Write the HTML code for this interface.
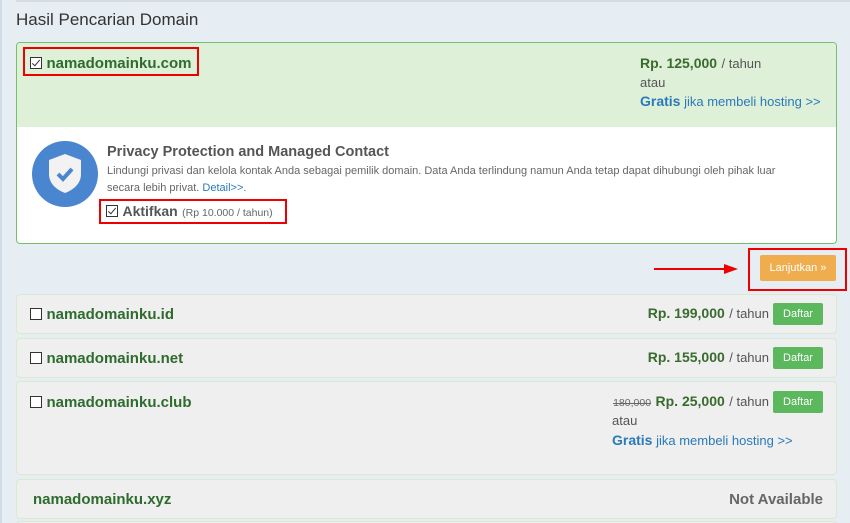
<!DOCTYPE html>
<html><head><style>
html,body{margin:0;width:850px;height:523px;overflow:hidden}
body{background:#e6edf3;font-family:"Liberation Sans",sans-serif;position:relative}
.a{position:absolute}
.lb{left:0;top:0;width:2px;height:523px;background:#cfdce6}
.tb{left:16px;top:0;width:834px;height:2px;background:#d5dde3}
h1{position:absolute;left:16px;top:10px;margin:0;font-weight:normal;font-size:17px;color:#333}
.box{left:16px;top:42px;width:819px;height:200px;border:1px solid #72c06e;border-radius:4px;background:#fff;overflow:hidden}
.gh{left:0;top:0;width:819px;height:84px;background:#dff0d8}
.red{border:2px solid #e00;box-sizing:border-box}
.cb{display:inline-block;width:12px;height:12px;border:1px solid #333;box-sizing:border-box;vertical-align:-1px;position:relative;background:#fff}
.cb.c:after{content:"";position:absolute;left:3px;top:0;width:3px;height:7px;border:solid #333;border-width:0 1.5px 1.5px 0;transform:rotate(40deg)}
.dn{color:#2e6b2e;font-weight:bold;font-size:15px}
.pr{color:#3a6b2e;font-weight:bold;font-size:14px}
.g{color:#555;font-size:13px}
.bl{color:#2a7ab8;font-size:13px}
.row{left:16px;width:819px;border:1px solid #d8ead2;border-radius:4px;background:#efefef}
.btn{background:#5cb85c;color:#fff;font-size:11px;width:50px;height:22px;line-height:22px;text-align:center;border-radius:2px;display:inline-block;margin-left:4px;vertical-align:middle}
.rt{right:27px;white-space:nowrap}
</style></head><body>
<div class="a lb"></div><div class="a tb"></div>
<h1>Hasil Pencarian Domain</h1>
<div class="a box">
 <div class="a gh"></div>
 <div class="a" style="left:623px;top:11px;line-height:19px;white-space:nowrap"><span class="pr">Rp. 125,000</span> <span class="g">/ tahun</span><br><span class="g">atau</span><br><span class="bl"><b style="font-size:14px">Gratis</b> jika membeli hosting &gt;&gt;</span></div>
 <svg class="a" style="left:14px;top:97px" width="68" height="68" viewBox="0 0 68 68"><circle cx="34" cy="34" r="33" fill="#4a85cf"/><path d="M34 14 L50 20 V34 C50 44 42 50 34 53 C26 50 18 44 18 34 V20Z" fill="#f2f2f2"/><path d="M27 34 L32 39 L41 29" stroke="#4a85cf" stroke-width="4" fill="none"/></svg>
 <div class="a" style="left:90px;top:101px;font-size:14.5px;font-weight:bold;color:#555">Privacy Protection and Managed Contact</div>
 <div class="a" style="left:90px;top:120px;width:695px;font-size:11px;color:#666;line-height:17px">Lindungi privasi dan kelola kontak Anda sebagai pemilik domain. Data Anda terlindung namun Anda tetap dapat dihubungi oleh pihak luar secara lebih privat. <span style="color:#2a7ab8">Detail&gt;&gt;</span>.</div>
</div>
<div class="a red" style="left:23px;top:47px;width:176px;height:29px"></div>
<div class="a" style="left:30px;top:55px"><span class="cb c"></span> <span class="dn">namadomainku.com</span></div>
<div class="a red" style="left:99px;top:199px;width:188px;height:25px"></div>
<div class="a" style="left:106px;top:203px"><span class="cb c"></span> <b style="font-size:14px;color:#555">Aktifkan</b> <span style="font-size:10.5px;color:#666">(Rp 10.000 / tahun)</span></div>
<svg class="a" style="left:654px;top:263px" width="86" height="12"><line x1="0" y1="6" x2="72" y2="6" stroke="#e00" stroke-width="2"/><path d="M70 1 L84 6 L70 11Z" fill="#e00"/></svg>
<div class="a red" style="left:748px;top:248px;width:99px;height:43px"></div>
<div class="a" style="left:760px;top:255px;width:76px;height:26px;background:#f0ad4e;border-radius:2px;color:#fff;font-size:11px;text-align:center;line-height:26px">Lanjutkan »</div>

<div class="a row" style="top:294px;height:38px"></div>
<div class="a" style="left:30px;top:306px"><span class="cb"></span> <span class="dn">namadomainku.id</span></div>
<div class="a rt" style="top:303px"><span class="pr">Rp. 199,000</span> <span class="g">/ tahun</span><span class="btn">Daftar</span></div>

<div class="a row" style="top:338px;height:38px"></div>
<div class="a" style="left:30px;top:350px"><span class="cb"></span> <span class="dn">namadomainku.net</span></div>
<div class="a rt" style="top:347px"><span class="pr">Rp. 155,000</span> <span class="g">/ tahun</span><span class="btn">Daftar</span></div>

<div class="a row" style="top:381px;height:92px"></div>
<div class="a" style="left:30px;top:394px"><span class="cb"></span> <span class="dn">namadomainku.club</span></div>
<div class="a rt" style="top:391px"><s style="font-size:10.5px;color:#666">180,000</s> <span class="pr">Rp. 25,000</span> <span class="g">/ tahun</span><span class="btn">Daftar</span></div>
<div class="a g" style="left:612px;top:413px">atau</div>
<div class="a bl" style="left:612px;top:432px;white-space:nowrap"><b style="font-size:14px">Gratis</b> jika membeli hosting &gt;&gt;</div>

<div class="a row" style="top:479px;height:38px"></div>
<div class="a dn" style="left:33px;top:491px">namadomainku.xyz</div>
<div class="a rt" style="top:491px;font-size:15px;font-weight:bold;color:#666">Not Available</div>
<div class="a row" style="top:521px;height:10px"></div>
</body></html>
